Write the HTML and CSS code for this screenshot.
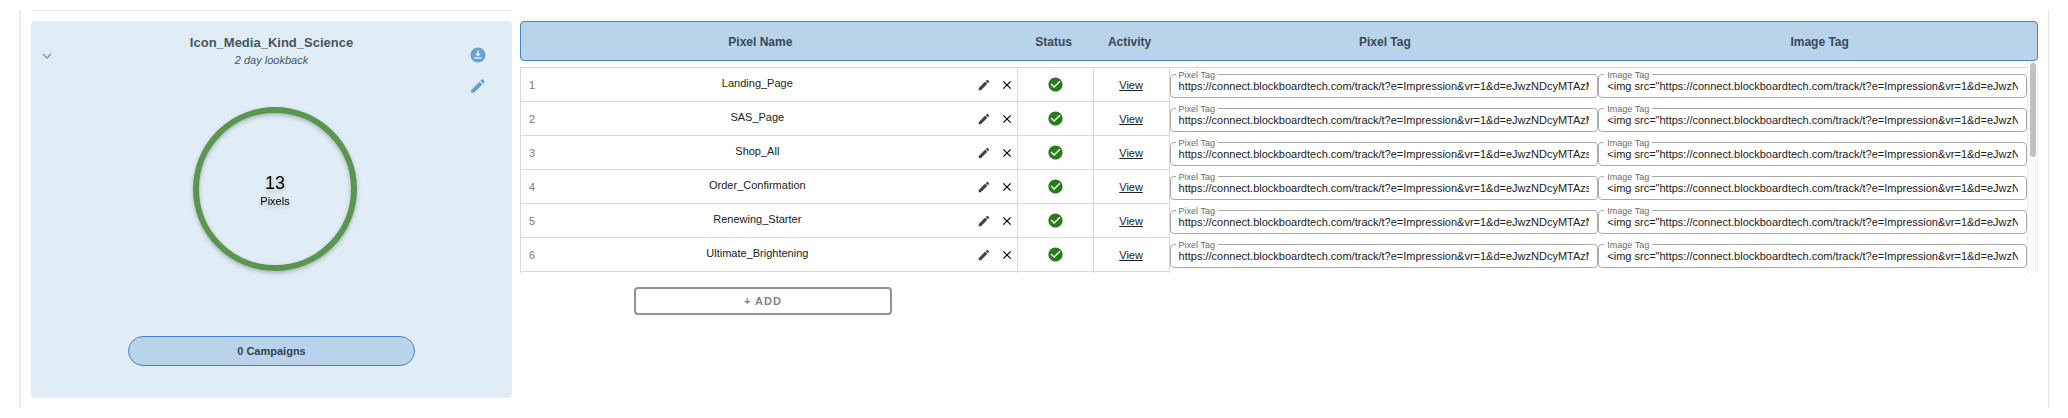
FILE: index.html
```html
<!DOCTYPE html>
<html lang="en">
  <head>
    <meta charset="UTF-8" />
    <title>Pixels</title>
    <link rel="stylesheet" href="styles.css">
  </head>
  <body>
    <svg class="sprite" aria-hidden="true">
      <symbol id="edit" viewBox="0 0 24 24">
        <path d="M3 17.25V21h3.75L17.81 9.94l-3.75-3.75L3 17.25zM20.71 7.04c.39-.39.39-1.02 0-1.41l-2.34-2.34c-.39-.39-1.02-.39-1.41 0l-1.83 1.83 3.75 3.75 1.83-1.83z" />
      </symbol>
      <symbol id="close" viewBox="0 0 24 24">
        <path d="M19 6.41 17.59 5 12 10.59 6.41 5 5 6.41 10.59 12 5 17.59 6.41 19 12 13.41 17.59 19 19 17.59 13.41 12z" />
      </symbol>
      <symbol id="check" viewBox="0 0 24 24">
        <path d="M12 2C6.48 2 2 6.48 2 12s4.48 10 10 10 10-4.48 10-10S17.52 2 12 2zm-2 15-5-5 1.41-1.41L10 14.17l7.59-7.59L19 8l-9 9z" />
      </symbol>
      <symbol id="download" viewBox="0 0 24 24">
        <path d="M12 2C6.49 2 2 6.49 2 12s4.49 10 10 10 10-4.49 10-10S17.51 2 12 2zm-1 8V6h2v4h3l-4 4-4-4h3zm6 7H7v-2h10v2z" />
      </symbol>
      <symbol id="expand" viewBox="0 0 24 24">
        <path d="M16.59 8.59 12 13.17 7.41 8.59 6 10l6 6 6-6z" />
      </symbol>
    </svg>

    <main class="frame">
      <section class="side">
        <div class="card">
          <div class="card-head">
            <button class="icon-btn" aria-label="Collapse"><svg><use href="#expand" /></svg></button>
            <div class="card-title">
              <h2>Icon_Media_Kind_Science</h2>
              <p>2 day lookback</p>
            </div>
            <div class="card-actions">
              <button class="icon-btn" aria-label="Download"><svg><use href="#download" /></svg></button>
              <button class="icon-btn" aria-label="Edit"><svg><use href="#edit" /></svg></button>
            </div>
          </div>
          <div class="ring-row">
            <div class="ring">
              <strong>13</strong>
              <span>Pixels</span>
            </div>
          </div>
          <button class="campaigns">0 Campaigns</button>
        </div>
      </section>

      <section class="pixels">
        <div class="table-wrap">
          <table class="pixel-table">
            <thead>
              <tr>
                <th class="name-head">Pixel Name</th>
                <th>Status</th>
                <th>Activity</th>
                <th>Pixel Tag</th>
                <th>Image Tag</th>
              </tr>
            </thead>
            <tbody>
              <tr>
                <td class="name">
                  <span class="num">1</span>
                  <span class="label">Landing_Page</span>
                  <button aria-label="Edit"><svg class="pencil"><use href="#edit" /></svg></button>
                  <button aria-label="Delete"><svg><use href="#close" /></svg></button>
                </td>
                <td class="status"><svg><use href="#check" /></svg></td>
                <td class="activity"><a href="#">View</a></td>
                <td class="tag"><label for="pt1">Pixel Tag</label><input id="pt1" readonly value="https://connect.blockboardtech.com/track/t?e=Impression&amp;vr=1&amp;d=eJwzNDcyMTAzMzI"></td>
                <td class="tag"><label for="it1">Image Tag</label><input id="it1" readonly value="&lt;img src=&quot;https://connect.blockboardtech.com/track/t?e=Impression&amp;vr=1&amp;d=eJwzNDcy"></td>
              </tr>
              <tr>
                <td class="name">
                  <span class="num">2</span>
                  <span class="label">SAS_Page</span>
                  <button aria-label="Edit"><svg class="pencil"><use href="#edit" /></svg></button>
                  <button aria-label="Delete"><svg><use href="#close" /></svg></button>
                </td>
                <td class="status"><svg><use href="#check" /></svg></td>
                <td class="activity"><a href="#">View</a></td>
                <td class="tag"><label for="pt2">Pixel Tag</label><input id="pt2" readonly value="https://connect.blockboardtech.com/track/t?e=Impression&amp;vr=1&amp;d=eJwzNDcyMTAzMzQ"></td>
                <td class="tag"><label for="it2">Image Tag</label><input id="it2" readonly value="&lt;img src=&quot;https://connect.blockboardtech.com/track/t?e=Impression&amp;vr=1&amp;d=eJwzNDcy"></td>
              </tr>
              <tr>
                <td class="name">
                  <span class="num">3</span>
                  <span class="label">Shop_All</span>
                  <button aria-label="Edit"><svg class="pencil"><use href="#edit" /></svg></button>
                  <button aria-label="Delete"><svg><use href="#close" /></svg></button>
                </td>
                <td class="status"><svg><use href="#check" /></svg></td>
                <td class="activity"><a href="#">View</a></td>
                <td class="tag"><label for="pt3">Pixel Tag</label><input id="pt3" readonly value="https://connect.blockboardtech.com/track/t?e=Impression&amp;vr=1&amp;d=eJwzNDcyMTAzszC"></td>
                <td class="tag"><label for="it3">Image Tag</label><input id="it3" readonly value="&lt;img src=&quot;https://connect.blockboardtech.com/track/t?e=Impression&amp;vr=1&amp;d=eJwzNDcy"></td>
              </tr>
              <tr>
                <td class="name">
                  <span class="num">4</span>
                  <span class="label">Order_Confirmation</span>
                  <button aria-label="Edit"><svg class="pencil"><use href="#edit" /></svg></button>
                  <button aria-label="Delete"><svg><use href="#close" /></svg></button>
                </td>
                <td class="status"><svg><use href="#check" /></svg></td>
                <td class="activity"><a href="#">View</a></td>
                <td class="tag"><label for="pt4">Pixel Tag</label><input id="pt4" readonly value="https://connect.blockboardtech.com/track/t?e=Impression&amp;vr=1&amp;d=eJwzNDcyMTAzszC"></td>
                <td class="tag"><label for="it4">Image Tag</label><input id="it4" readonly value="&lt;img src=&quot;https://connect.blockboardtech.com/track/t?e=Impression&amp;vr=1&amp;d=eJwzNDcy"></td>
              </tr>
              <tr>
                <td class="name">
                  <span class="num">5</span>
                  <span class="label">Renewing_Starter</span>
                  <button aria-label="Edit"><svg class="pencil"><use href="#edit" /></svg></button>
                  <button aria-label="Delete"><svg><use href="#close" /></svg></button>
                </td>
                <td class="status"><svg><use href="#check" /></svg></td>
                <td class="activity"><a href="#">View</a></td>
                <td class="tag"><label for="pt5">Pixel Tag</label><input id="pt5" readonly value="https://connect.blockboardtech.com/track/t?e=Impression&amp;vr=1&amp;d=eJwzNDcyMTAzNzU"></td>
                <td class="tag"><label for="it5">Image Tag</label><input id="it5" readonly value="&lt;img src=&quot;https://connect.blockboardtech.com/track/t?e=Impression&amp;vr=1&amp;d=eJwzNDcy"></td>
              </tr>
              <tr>
                <td class="name">
                  <span class="num">6</span>
                  <span class="label">Ultimate_Brightening</span>
                  <button aria-label="Edit"><svg class="pencil"><use href="#edit" /></svg></button>
                  <button aria-label="Delete"><svg><use href="#close" /></svg></button>
                </td>
                <td class="status"><svg><use href="#check" /></svg></td>
                <td class="activity"><a href="#">View</a></td>
                <td class="tag"><label for="pt6">Pixel Tag</label><input id="pt6" readonly value="https://connect.blockboardtech.com/track/t?e=Impression&amp;vr=1&amp;d=eJwzNDcyMTAzNzV"></td>
                <td class="tag"><label for="it6">Image Tag</label><input id="it6" readonly value="&lt;img src=&quot;https://connect.blockboardtech.com/track/t?e=Impression&amp;vr=1&amp;d=eJwzNDcy"></td>
              </tr>
              <tr class="rest">
                <td></td>
                <td></td>
                <td></td>
                <td></td>
                <td></td>
              </tr>
            </tbody>
          </table>
          <div class="scrollbar"><div class="thumb"></div></div>
        </div>
        <div class="add-row">
          <button class="add">+ ADD</button>
        </div>
      </section>
    </main>
  </body>
</html>
```

FILE: styles.css
```css
* {
  box-sizing: border-box;
}

body {
  margin: 10px 19px;
  background-color: #fff;
  color: #222;
  font-family: "Liberation Sans", Arial, sans-serif;
  font-size: 11px;
}

button {
  font-family: inherit;
  padding: 0;
  border: none;
  background: none;
  cursor: pointer;
}

svg {
  display: block;
  fill: currentColor;
}

.sprite {
  display: none;
}

.frame {
  display: grid;
  grid-template-columns: 481fr 1518fr;
  gap: 8px;
  padding: 0 10px 10px;
  border-left: 2px solid #ebebee;
  border-right: 1px solid #e4e4e8;
}

/* left card */
.side {
  border-top: 1px solid #ebebee;
  padding-top: 10px;
}

.card {
  display: flex;
  flex-direction: column;
  align-items: center;
  padding: 14px 25px 32px 7px;
  border-radius: 4px;
  background-color: #e1edf6;
}

.card-head {
  display: flex;
  align-items: flex-start;
  justify-content: space-between;
  width: 100%;
  height: 72px;
}

.card-head > .icon-btn {
  margin-top: 12px;
}

.icon-btn {
  color: #6a9fd4;
}

.icon-btn svg {
  width: 18px;
  height: 18px;
}

.card-title {
  text-align: center;
  color: #455560;
  padding-left: 18px;
}

.card-title h2 {
  margin: 0;
  font-size: 13px;
  line-height: 16px;
}

.card-title p {
  margin: 1px 0 0;
  font-style: italic;
  line-height: 16px;
}

.card-actions {
  display: grid;
  gap: 13px;
  padding-top: 11px;
}

.ring-row {
  padding-left: 25px;
}

.ring {
  display: flex;
  flex-direction: column;
  align-items: center;
  justify-content: center;
  width: 164px;
  height: 164px;
  padding-top: 2px;
  border: 6px solid #5a964f;
  border-radius: 50%;
  color: #000;
  filter: drop-shadow(0 2px 2px rgba(0, 0, 0, 0.25));
}

.ring strong {
  font-size: 18px;
  font-weight: normal;
  line-height: 22px;
}

.ring span {
  line-height: 15px;
}

.campaigns {
  width: 64%;
  height: 30px;
  margin: 65px 0 0 18px;
  border: 1px solid #4a80c4;
  border-radius: 15px;
  background-color: #b9d3ea;
  color: #34434f;
  font-size: 11px;
  font-weight: bold;
}

/* pixel table */
.pixels {
  padding-top: 11px;
}

.table-wrap {
  position: relative;
}

.pixel-table,
.pixel-table thead {
  display: block;
}

.pixel-table tr {
  display: grid;
  grid-template-columns: 498fr 76fr 76fr 429fr 429fr;
}

.pixel-table thead tr {
  grid-template-columns: 495fr 76fr 76fr 435fr 435fr;
  align-items: center;
  height: 40px;
  padding-top: 2px;
  border: 1px solid #4a80c4;
  border-radius: 4px;
  background-color: #b9d3ea;
}

.pixel-table th {
  padding: 0;
  color: #374957;
  font-size: 12px;
}

.pixel-table .name-head {
  padding-right: 16px;
}

.pixel-table tbody {
  display: block;
  height: 212px;
  margin-right: 11px;
  padding-top: 6px;
  overflow-y: auto;
  scrollbar-width: none;
}

.pixel-table tbody tr {
  height: 34px;
}

.pixel-table tbody tr:first-child {
  height: 35px;
  border-top: 1px solid #d8d8d8;
}

.pixel-table tbody .rest {
  height: 238px;
}

.pixel-table td {
  display: flex;
  align-items: center;
  justify-content: center;
  min-width: 0;
  padding: 0;
  border-right: 1px solid #d8d8d8;
  border-bottom: 1px solid #d8d8d8;
}

.pixel-table td:first-child {
  border-left: 1px solid #d8d8d8;
}

.pixel-table td:nth-child(n + 4) {
  border: none;
}

.pixel-table .name {
  gap: 9px;
  padding: 0 3px 0 8px;
}

.name .num {
  width: 9px;
  color: #777;
}

.name .label {
  flex: 1;
  padding-bottom: 3px;
  text-align: center;
}

.name svg {
  width: 14px;
  height: 14px;
}

.name button {
  color: #000;
}

.name .pencil {
  color: #444;
}

.status svg {
  width: 17px;
  height: 17px;
  color: #2a7a1e;
}

.activity a {
  color: #222;
}

.pixel-table .tag {
  position: relative;
  align-items: flex-start;
  padding-top: 6px;
}

.tag label {
  position: absolute;
  top: 2px;
  left: 6px;
  padding: 0 3px;
  background-color: #fff;
  color: #6b6b6b;
  font-size: 9px;
  line-height: 10px;
}

.tag input {
  width: 100%;
  height: 24px;
  padding: 0 8px;
  border: 1px solid #aaa;
  border-radius: 4px;
  background-color: #fff;
  color: #222;
  font-family: inherit;
  font-size: 11px;
}

/* sits over the right edge of the scrolling rows */
.scrollbar {
  position: absolute;
  top: 41px;
  right: 0;
  bottom: 0;
  width: 11px;
  padding: 1px 1px 1px 2px;
  border-left: 1px solid #eee;
  border-right: 1px solid #eee;
  background-color: #fafafa;
}

.thumb {
  height: 45%;
  border-radius: 3px;
  background-color: #c1c1c1;
}

.add-row {
  display: flex;
  justify-content: center;
  width: 32%;
  padding-top: 14px;
}

.add {
  width: 53%;
  height: 28px;
  border: 2px solid #9090a0;
  border-radius: 4px;
  color: #858590;
  font-size: 11px;
  font-weight: bold;
  letter-spacing: 1px;
}
```
